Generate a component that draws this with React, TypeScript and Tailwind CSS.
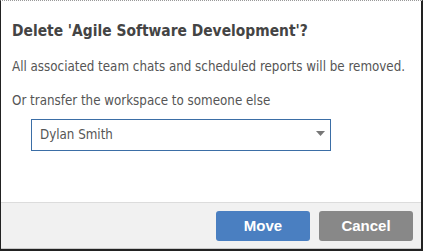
import React from "react";

const textFont = { fontFamily: '"DejaVu Sans Condensed", "DejaVu Sans", sans-serif' };
const btnFont = { fontFamily: '"Liberation Sans", Arial, sans-serif' };

export default function App() {
  return (
    <div
      className="w-[423px] h-[251px] bg-white flex flex-col border-solid border-l border-l-[#222] border-r-[2px] border-r-[#222] border-t border-t-[#999] [border-top-style:dotted]"
      style={textFont}
    >
      {/* body */}
      <div className="flex-1 pl-[11px] pt-[20px]">
        <h2 className="text-[15.4px] leading-[20px] font-bold text-[#444]">
          Delete 'Agile Software Development'?
        </h2>
        <p className="mt-[16px] text-[13.25px] leading-[20px] text-[#555]">
          All associated team chats and scheduled reports will be removed.
        </p>
        <p className="mt-[14px] text-[13.25px] leading-[20px] text-[#555]">
          Or transfer the workspace to someone else
        </p>
        <div className="ml-[19px] mt-[8px] w-[300px] h-[32px] border border-[#3b6ea6] flex items-center justify-between pl-[8px] pr-[5px]">
          <span className="text-[13.25px] text-[#555]">Dylan Smith</span>
          <svg width="9" height="5" viewBox="0 0 9 5" className="mt-[-4px]">
            <path d="M0 0 H9 L4.5 5 Z" fill="#777" />
          </svg>
        </div>
      </div>
      {/* footer */}
      <div className="h-[49px] border-t border-[#dcdcdc] bg-[#f1f1f1] flex flex-col">
        <div className="flex-1 flex items-start justify-end gap-[9px] pr-[8px] pt-[8px]">
          <button className="w-[94px] h-[30px] rounded-[3px] bg-[#4a7fc1] text-white text-[15px] font-bold" style={btnFont}>
            Move
          </button>
          <button className="w-[94px] h-[30px] rounded-[3px] bg-[#888888] text-white text-[15px] font-bold" style={btnFont}>
            Cancel
          </button>
        </div>
        <div className="h-[1px] bg-[#c8c8c8]" />
        <div className="h-[2px] bg-[#222]" />
      </div>
    </div>
  );
}
